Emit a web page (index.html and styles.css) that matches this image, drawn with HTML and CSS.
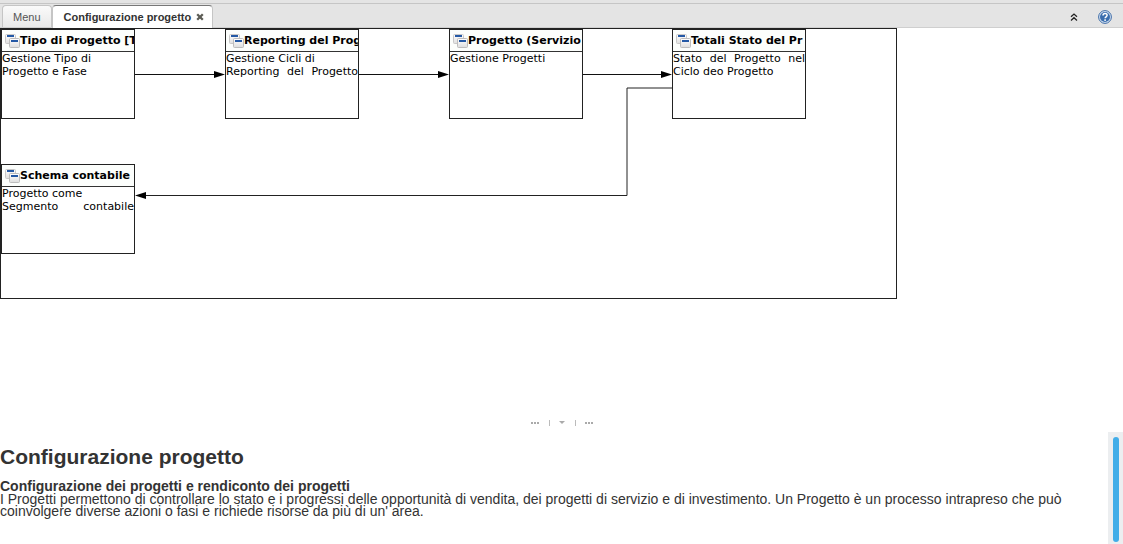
FILE: index.html
```html
<!DOCTYPE html>
<html lang="it">
<head>
<meta charset="utf-8">
<title>Configurazione progetto</title>
<link rel="stylesheet" href="styles.css">
</head>
<body>
<svg class="defs" aria-hidden="true">
  <defs>
    <linearGradient id="pane" x1="0" y1="0" x2="0" y2="1"><stop offset="0" stop-color="#fff"/><stop offset="1" stop-color="#dedede"/></linearGradient>
    <symbol id="windows" viewBox="0 0 15 14">
      <rect x=".5" y=".5" width="10" height="9" rx="1" fill="url(#pane)" stroke="#c8c8c8"/>
      <rect x="2" y="1" width="7" height="2" fill="#2459a5"/>
      <rect x="4.500" y="4.500" width="10" height="9" rx="1" fill="url(#pane)" stroke="#bdbdbd"/>
      <rect x="6" y="6" width="7" height="2" fill="#2459a5"/>
    </symbol>
  </defs>
</svg>
<header class="bar">
  <nav class="tabs">
    <button class="tab" type="button">Menu</button>
    <div class="tab tab-active">
      <button class="tab-label" type="button">Configurazione progetto</button>
      <button class="icon-button" type="button" aria-label="Chiudi"><svg width="8" height="8" viewBox="0 0 8 8"><path d="M1.200 1.200 6.800 6.800M6.800 1.200 1.200 6.800" stroke="#5c5c55" stroke-width="2.300"/></svg></button>
    </div>
  </nav>
  <div class="tools">
    <button class="icon-button" type="button" aria-label="Comprimi"><svg width="8" height="8" viewBox="0 0 8 8"><path d="M1 3.700 4 1l3 2.700M1 7.400 4 4.700l3 2.700" fill="none" stroke="#222" stroke-width="1.300"/></svg></button>
    <button class="icon-button" type="button" aria-label="Aiuto"><svg width="14" height="14" viewBox="0 0 14 14"><circle cx="7" cy="7" r="6.400" fill="#d5e2f2" stroke="#3f6da7" stroke-width="1"/><circle cx="7" cy="7" r="5" fill="#3b6eae"/><path d="M5 5.500C5 2.800 9.100 2.900 9.100 5.300 9.100 6.800 7.100 6.800 7.100 8.300" fill="none" stroke="#fff" stroke-width="1.500"/><rect x="6.300" y="9.300" width="1.600" height="1.600" fill="#fff"/></svg></button>
  </div>
</header>
<main class="workflow">
  <div class="canvas">
    <svg class="links" viewBox="0 0 895 269" aria-hidden="true">
      <g fill="none" stroke="#111">
        <path d="M134 45.500H215M358 45.500H439M581 45.500H662"/>
        <path d="M671 59H626V166.500H144" stroke="#222"/>
      </g>
      <g fill="#000">
        <path d="M213 42 224 45.500 213 49zM437 42 448 45.500 437 49zM660 42 671 45.500 660 49zM145 163 134 166.500 145 170z"/>
      </g>
    </svg>
    <section class="node node-type"><h2 class="node-title"><svg class="node-icon"><use href="#windows"/></svg>Tipo di Progetto [T</h2><p class="node-text">Gestione Tipo di<br>Progetto e Fase</p></section>
    <section class="node node-reporting"><h2 class="node-title"><svg class="node-icon"><use href="#windows"/></svg>Reporting del Prog</h2><p class="node-text">Gestione Cicli di</p><p class="node-text spread">Reporting del Progetto</p></section>
    <section class="node node-project"><h2 class="node-title"><svg class="node-icon"><use href="#windows"/></svg>Progetto (Servizio</h2><p class="node-text">Gestione Progetti</p></section>
    <section class="node node-totals"><h2 class="node-title"><svg class="node-icon"><use href="#windows"/></svg>Totali Stato del Pr</h2><p class="node-text spread">Stato del Progetto nel</p><p class="node-text">Ciclo deo Progetto</p></section>
    <section class="node node-schema"><h2 class="node-title"><svg class="node-icon"><use href="#windows"/></svg>Schema contabile</h2><p class="node-text">Progetto come</p><p class="node-text spread">Segmento contabile</p></section>
  </div>
</main>
<div class="splitter">
  <button class="icon-button" type="button" aria-label="Riduci pannello"><svg width="62" height="8" viewBox="0 0 62 8"><g fill="#aaa"><path d="M0 3h2v2H0zM3 3h2v2H3zM6 3h2v2H6zM54 3h2v2h-2zM57 3h2v2h-2zM60 3h2v2h-2z"/><path d="M28 2h6L31 5z"/></g><path d="M18.500 1v6M44.500 1v6" stroke="#bbb"/></svg></button>
</div>
<section class="help">
  <article class="help-body">
    <h1 class="help-title">Configurazione progetto</h1>
    <h2 class="help-subtitle">Configurazione dei progetti e rendiconto dei progetti</h2>
    <p class="help-text">I Progetti permettono di controllare lo stato e i progressi delle opportunità di vendita, dei progetti di servizio e di investimento. Un Progetto è un processo intrapreso che può coinvolgere diverse azioni o fasi e richiede risorse da più di un' area.</p>
  </article>
  <div class="scroll-track"><div class="scroll-thumb"></div></div>
</section>
</body>
</html>
```
FILE: styles.css
```css
* { box-sizing: border-box; }
body {
  margin: 0;
  height: 100vh;
  display: flex;
  flex-direction: column;
  background: #fff;
  color: #333;
  font-family: "Liberation Sans", Arial, sans-serif;
}
h1, h2, p { margin: 0; }
button { font: inherit; color: inherit; cursor: pointer; }
.defs { position: absolute; width: 0; height: 0; }
.icon-button, .tab-label { padding: 0; border: 0; background: none; }
.icon-button { display: flex; }

.bar {
  flex: none;
  height: 28px;
  display: flex;
  justify-content: space-between;
  align-items: flex-end;
  background: linear-gradient(#e4e4e4 3px, #c5c5c5 3px, #c5c5c5 4px, #e4e4e4 4px);
  border-bottom: 1px solid #cfcfcf;
}
.tabs { display: flex; align-items: flex-end; padding-left: 2px; font-size: 11px; }
.tab {
  height: 22px;
  padding: 0 10px;
  border: 1px solid #c5c5c5;
  border-bottom: 0;
  border-radius: 4px 4px 0 0;
  background: linear-gradient(#fafafa, #e9e9e9);
  color: #555;
}
.tab-active {
  height: 23px;
  margin-bottom: -1px;
  display: flex;
  align-items: center;
  gap: 5px;
  padding: 0 8px 0 11px;
  border-color: #777 #c5c5c5 #fff;
  background: #fff;
  color: #333;
  font-weight: bold;
}
.tools { display: flex; align-items: center; gap: 20px; padding: 0 11px 3px 0; }

.workflow { flex: 1; min-height: 0; overflow: hidden; }
.canvas { position: relative; width: 897px; height: 271px; border: 1px solid #222; }
.links { position: absolute; inset: 0; }
.node {
  position: absolute;
  width: 134px;
  height: 90px;
  overflow: hidden;
  border: 1px solid #222;
  background: #fff;
  color: #000;
  font-family: "DejaVu Sans", sans-serif;
  font-size: 11px;
  line-height: 13px;
}
.node-type { left: 0; top: 0; }
.node-reporting { left: 224px; top: 0; }
.node-project { left: 448px; top: 0; }
.node-totals { left: 671px; top: 0; }
.node-schema { left: 0; top: 135px; }
.node-title {
  height: 22px;
  display: flex;
  align-items: center;
  padding-left: 3px;
  border-bottom: 1px solid #333;
  background: #fcfefc;
  font-size: 11px;
  white-space: nowrap;
}
.node-icon { flex: none; width: 15px; height: 14px; }
.spread { text-align-last: justify; }

.splitter { flex: none; height: 18px; display: flex; align-items: center; justify-content: center; }
.help { flex: none; height: 112px; display: flex; }
.help-body { flex: 1; padding-top: 12px; padding-right: 16px; }
.help-title { font-size: 21px; line-height: 26px; margin-bottom: 10px; }
.help-subtitle { font-size: 14px; line-height: 13px; }
.help-text { font-size: 14px; line-height: 12px; }
.scroll-track { flex: none; width: 15px; padding: 5px 4px 2px 5px; background: #eceef0; }
.scroll-thumb { height: 100%; border-radius: 3px; background: #41ade8; }
```
